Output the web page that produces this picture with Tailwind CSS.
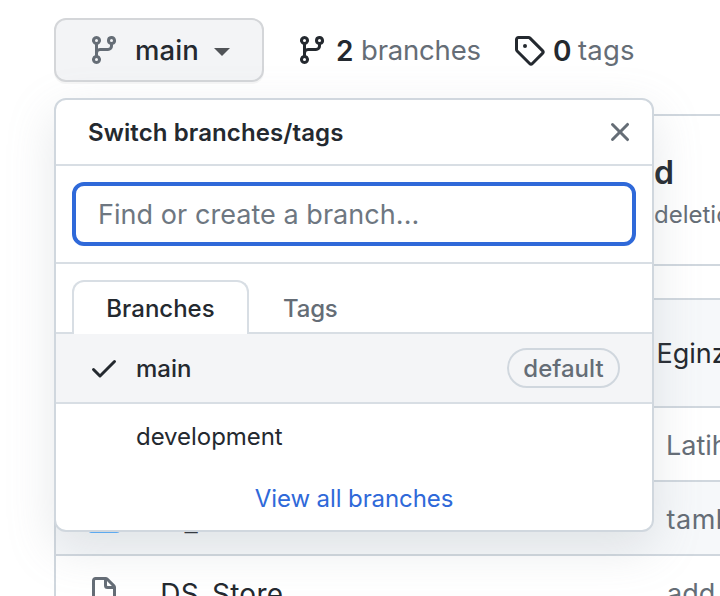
<!DOCTYPE html>
<html lang="en">
<head>
<meta charset="utf-8">
<title>Switch branches/tags</title>
<script src="https://cdn.jsdelivr.net/npm/@tailwindcss/browser@4"></script>
</head>
<body class="bg-white">
<div class="relative h-[596px] w-[720px] overflow-hidden bg-white font-[Inter,sans-serif] text-[28px] text-[#24292f]">

  <!-- Toolbar -->
  <div class="flex h-[114px] items-start pl-[54px] pt-[18px]">
    <button class="flex h-16 w-[210px] shrink-0 items-center rounded-xl border-2 border-[#d4d6d9] bg-[#f3f4f6] pl-8 shadow-[0_2px_0_rgba(27,31,36,0.04)]">
      <svg class="size-8 fill-[#656d76]" viewBox="0 0 16 16" fill-rule="evenodd"><path d="M11.75 2.5a.75.75 0 100 1.5.75.75 0 000-1.5zm-2.25.75a2.25 2.25 0 113 2.122V6A2.5 2.5 0 0110 8.5H6a1 1 0 00-1 1v1.128a2.251 2.251 0 11-1.5 0V5.372a2.25 2.25 0 111.5 0v1.836A2.492 2.492 0 016 7h4a1 1 0 001-1v-.628A2.25 2.25 0 019.5 3.25zM4.25 12a.75.75 0 100 1.5.75.75 0 000-1.5zM3.5 3.25a.75.75 0 111.5 0 .75.75 0 01-1.5 0z"/></svg>
      <span class="ml-[15px] w-[79px] pb-px text-left text-[27.5px] leading-8 font-medium tracking-[0.1px]">main</span>
      <span class="mt-1 border-x-8 border-t-8 border-x-transparent border-t-[#505357]"></span>
    </button>
    <div class="ml-8 flex h-16 items-center">
      <svg class="size-8 fill-[#24292f]" viewBox="0 0 16 16" fill-rule="evenodd"><path d="M11.75 2.5a.75.75 0 100 1.5.75.75 0 000-1.5zm-2.25.75a2.25 2.25 0 113 2.122V6A2.5 2.5 0 0110 8.5H6a1 1 0 00-1 1v1.128a2.251 2.251 0 11-1.5 0V5.372a2.25 2.25 0 111.5 0v1.836A2.492 2.492 0 016 7h4a1 1 0 001-1v-.628A2.25 2.25 0 019.5 3.25zM4.25 12a.75.75 0 100 1.5.75.75 0 000-1.5zM3.5 3.25a.75.75 0 111.5 0 .75.75 0 01-1.5 0z"/></svg>
      <span class="ml-2 w-[25px] pt-0.5 font-semibold">2</span>
      <span class="w-[152px] whitespace-nowrap pt-0.5 text-[27.5px] tracking-[-0.2px] text-[#656d76]">branches</span>
      <svg class="size-8 fill-[#24292f]" viewBox="0 0 16 16" fill-rule="evenodd"><path d="M2.5 7.775V2.75a.25.25 0 01.25-.25h5.025a.25.25 0 01.177.073l6.25 6.25a.25.25 0 010 .354l-5.025 5.025a.25.25 0 01-.354 0l-6.25-6.25a.25.25 0 01-.073-.177zm-1.5 0V2.75C1 1.784 1.784 1 2.75 1h5.025c.464 0 .91.184 1.238.513l6.25 6.25a1.75 1.75 0 010 2.474l-5.026 5.026a1.75 1.75 0 01-2.474 0l-6.25-6.25A1.75 1.75 0 011 7.775zM6 5a1 1 0 100 2 1 1 0 000-2z"/></svg>
      <span class="ml-2 w-[25px] pt-0.5 font-semibold">0</span>
      <span class="pt-0.5 text-[27.5px] tracking-[0.2px] text-[#656d76]">tags</span>
    </div>
  </div>

  <!-- Latest commit summary -->
  <section class="ml-[54px] h-[152px] w-[700px] rounded-xl border-2 border-[#d0d7de] pl-[598px] pt-[38px]">
    <div class="text-[32px] leading-[38px] font-semibold">d</div>
    <div class="mt-2 text-[24px] leading-[30px] text-[#656d76]">deletions</div>
  </section>

  <!-- File list -->
  <section class="ml-[54px] mt-8 w-[700px] rounded-t-xl border-2 border-b-0 border-[#d0d7de]">
    <div class="flex h-[106px] items-center rounded-t-[10px] bg-[#f6f8fa] pl-[600.5px] pt-0.5 text-[27px]">Eginz</div>
    <div class="flex h-[74px] items-center border-t-2 border-[#d0d7de] pl-[610px] pt-1 text-[27px] text-[#656d76]">Latihan</div>
    <div class="flex h-[74px] items-center border-t-2 border-[#d0d7de] bg-[#f6f8fa] pl-8 pt-0.5 text-[27px]">
      <svg class="size-8 shrink-0 fill-[#54aeff]" viewBox="0 0 16 16"><path d="M1.75 1A1.75 1.75 0 000 2.75v10.5C0 14.216.784 15 1.75 15h12.5A1.75 1.75 0 0016 13.25v-8.5A1.75 1.75 0 0014.25 3h-6.5a.25.25 0 01-.2-.1l-.9-1.2C6.07 1.26 5.55 1 5 1H1.75z"/></svg>
      <span class="ml-10 w-[506.5px] shrink-0 pt-[3px] text-[29px]">ts_lib</span>
      <span class="shrink-0 pt-0.5 tracking-[0.5px] text-[#656d76]">tambah</span>
    </div>
    <div class="flex h-[74px] items-center border-t-2 border-[#d0d7de] pl-8 text-[27px]">
      <svg class="mt-0.5 size-8 shrink-0 fill-[#656d76]" viewBox="0 0 16 16" fill-rule="evenodd"><path d="M3.75 1.5a.25.25 0 00-.25.25v11.5c0 .138.112.25.25.25h8.5a.25.25 0 00.25-.25V6H9.75A1.75 1.75 0 018 4.25V1.5H3.75zm5.75.56v2.19c0 .138.112.25.25.25h2.19L9.5 2.06zM2 1.75C2 .784 2.784 0 3.75 0h5.086c.464 0 .909.184 1.237.513l3.414 3.414c.329.328.513.773.513 1.237v8.086A1.75 1.75 0 0112.25 15h-8.5A1.75 1.75 0 012 13.25V1.75z"/></svg>
      <span class="ml-8 w-[515px] shrink-0 pt-[3px] text-[28px] tracking-[0.25px]">.DS_Store</span>
      <span class="shrink-0 pt-1 text-[#656d76]">add</span>
    </div>
  </section>

  <!-- Branch picker overlay -->
  <div class="absolute left-[54px] top-[98px] flex h-[434px] w-[600px] flex-col overflow-hidden rounded-xl border-2 border-[#d0d7de] bg-white text-[24px] shadow-[0_16px_48px_rgba(140,149,159,0.22)]">
    <header class="flex h-[66px] shrink-0 items-center justify-between border-b-2 border-[#d8dee4] pl-8 pr-4">
      <span class="pt-0.5 font-semibold tracking-[0.1px]">Switch branches/tags</span>
      <svg class="size-8 fill-[#656d76]" viewBox="0 0 16 16"><path d="M3.72 3.72a.75.75 0 011.06 0L8 6.94l3.22-3.22a.75.75 0 111.06 1.06L9.06 8l3.22 3.22a.75.75 0 11-1.06 1.06L8 9.06l-3.22 3.22a.75.75 0 01-1.06-1.06L6.94 8 3.72 4.78a.75.75 0 010-1.06z"/></svg>
    </header>
    <div class="h-[98px] shrink-0 border-b-2 border-[#d8dee4] p-4">
      <div class="flex h-16 items-center rounded-xl border-4 border-[#2f69d9] pl-[22px] pt-0.5 text-[27px] tracking-[0.05px] text-[#6e7781]">Find or create a branch...</div>
    </div>
    <div class="flex h-[70px] shrink-0 items-end border-b-2 border-[#d8dee4] pl-4">
      <div class="-mb-0.5 flex h-[54px] w-[177px] items-center justify-center rounded-t-xl border-2 border-b-0 border-[#d8dee4] bg-white pt-0.5 font-medium">Branches</div>
      <div class="ml-[34px] flex h-[50px] items-center pt-1 font-medium tracking-[-0.2px] text-[#656d76]">Tags</div>
    </div>
    <div class="flex h-[70px] shrink-0 items-center border-b-2 border-[#d8dee4] bg-[#f4f5f7] pl-8 pr-8">
      <svg class="size-8 fill-[#24292f]" viewBox="0 0 16 16"><path d="M13.78 4.22a.75.75 0 010 1.06l-7.25 7.25a.75.75 0 01-1.06 0L2.22 9.28a.75.75 0 011.06-1.06L6 10.94l6.72-6.72a.75.75 0 011.06 0z"/></svg>
      <span class="ml-4 pt-0.5 font-medium">main</span>
      <span class="ml-auto flex h-10 w-[113px] items-center justify-center rounded-full border-2 border-[#d0d7de] pt-0.5 font-medium text-[#656d76]">default</span>
    </div>
    <div class="flex h-[66px] shrink-0 items-center pl-20 tracking-[-0.05px]">development</div>
    <div class="flex h-[58px] items-center justify-center tracking-[-0.1px] text-[#2f69d9]">View all branches</div>
  </div>
</div>
</body>
</html>
